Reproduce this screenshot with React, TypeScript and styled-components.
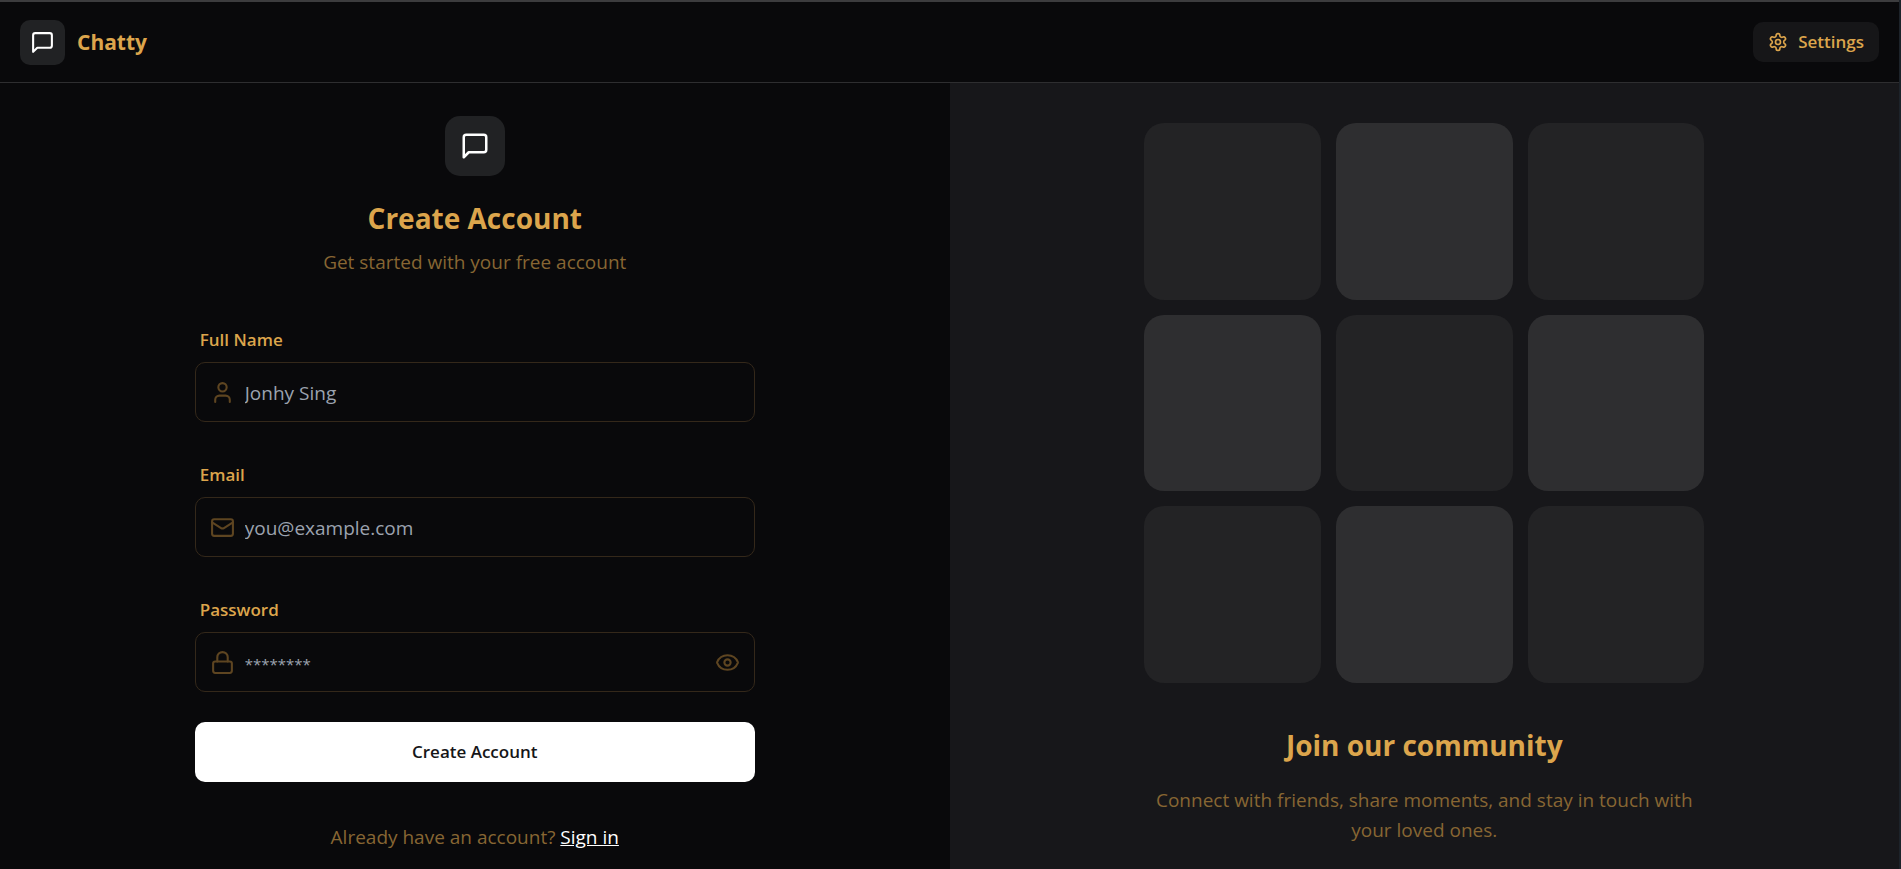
import React, { useState } from "react";
import styled, { createGlobalStyle } from "styled-components";
import { Eye, EyeOff, Lock, Mail, User } from "lucide-react";

const color = {
  page: "#09090b",
  panel: "#17171a",
  badge: "#212224",
  accent: "#dca54c",
  muted: "#876633",
  faint: "#5e4521",
  outline: "#34281a",
  placeholder: "#9ca3af",
};

const GlobalStyle = createGlobalStyle`
  *, *::before, *::after { box-sizing: border-box; }
  html { background: #1d232a; }
  body {
    margin: 0;
    font-family: "Segoe UI", "Open Sans", "Noto Sans", sans-serif;
    font-size: 19px;
    line-height: 30px;
    color: ${color.accent};
  }
  h1, h2, p { margin: 0; }
  button, input { font: inherit; }
`;

const Page = styled.div`
  min-height: 100vh;
  margin-right: 2px;
  display: flex;
  flex-direction: column;
  background: ${color.page};
  border-top: 2px solid #3c3c3e;
`;

const Header = styled.header`
  display: flex;
  align-items: center;
  justify-content: space-between;
  height: 81px;
  padding: 0 20px;
  border-bottom: 1px solid #2e2e30;
`;

const Brand = styled.a`
  display: flex;
  align-items: center;
  gap: 12px;
  color: ${color.accent};
  font-size: 21px;
  font-weight: 700;
  text-decoration: none;
`;

const Badge = styled.span<{ $large?: boolean }>`
  display: flex;
  align-items: center;
  justify-content: center;
  width: ${(p) => (p.$large ? 60 : 45)}px;
  height: ${(p) => (p.$large ? 60 : 45)}px;
  border-radius: ${(p) => (p.$large ? 15 : 10)}px;
  background: ${color.badge};
  color: #fff;
`;

const SettingsButton = styled.button`
  display: flex;
  align-items: center;
  gap: 10px;
  height: 40px;
  padding: 0 15px;
  border: 0;
  border-radius: 10px;
  background: #161618;
  color: ${color.accent};
  font-size: 17px;
  font-weight: 600;
  cursor: pointer;
`;

const Main = styled.main`
  flex: 1;
  display: grid;
  grid-template-columns: 1fr 1fr;
`;

const FormPanel = styled.section`
  display: flex;
  flex-direction: column;
  align-items: center;
  padding: 33px 60px 0;
`;

const Intro = styled.div`
  display: flex;
  flex-direction: column;
  align-items: center;
  text-align: center;
`;

const Title = styled.h1`
  margin: 22px 0 9px;
  font-size: 28px;
  line-height: 40px;
`;

const Muted = styled.p`
  color: ${color.muted};
`;

const Form = styled.form`
  width: 100%;
  max-width: 560px;
  margin-top: 40px;
  display: flex;
  flex-direction: column;
  gap: 30px;
`;

const Field = styled.div`
  display: flex;
  flex-direction: column;
`;

const Label = styled.label`
  height: 45px;
  padding: 8px 5px;
  font-size: 17px;
  font-weight: 600;
`;

const InputBox = styled.div`
  display: flex;
  align-items: center;
  gap: 10px;
  height: 60px;
  padding: 0 14px;
  border: 1px solid ${color.outline};
  border-radius: 10px;
  color: ${color.faint};
`;

const Input = styled.input`
  flex: 1;
  min-width: 0;
  height: 56px;
  padding: 2px 0 0;
  border: 0;
  outline: 0;
  background: transparent;
  color: ${color.accent};
  &::placeholder { color: ${color.placeholder}; opacity: 1; }
  &[type="password"]::placeholder { font-size: 15px; }
`;

const IconButton = styled.button`
  display: flex;
  padding: 0;
  border: 0;
  background: transparent;
  color: inherit;
  cursor: pointer;
`;

const SubmitButton = styled.button`
  height: 60px;
  border: 0;
  border-radius: 10px;
  background: #fff;
  color: #161618;
  font-size: 17px;
  font-weight: 600;
  cursor: pointer;
`;

const SignIn = styled(Muted)`
  margin-top: 40px;
`;

const SignInLink = styled.a`
  color: #fff;
`;

const Community = styled.aside`
  display: flex;
  flex-direction: column;
  align-items: center;
  padding: 40px 60px 0;
  background: ${color.panel};
  text-align: center;
`;

const Pattern = styled.div`
  width: 100%;
  max-width: 560px;
  display: grid;
  grid-template-columns: repeat(3, 1fr);
  gap: 15px;
`;

const Tile = styled.div<{ $bright: boolean }>`
  aspect-ratio: 1;
  border-radius: 20px;
  background: ${(p) => (p.$bright ? "#2e2e30" : "#232325")};
`;

const CommunityTitle = styled.h2`
  margin-top: 42px;
  font-size: 28px;
  line-height: 40px;
`;

const CommunityText = styled(Muted)`
  max-width: 560px;
  margin-top: 20px;
`;

const OutlineIcon = styled.svg.attrs({
  viewBox: "0 0 24 24",
  fill: "none",
  stroke: "currentColor",
  strokeWidth: 2,
  strokeLinecap: "round",
  strokeLinejoin: "round",
  "aria-hidden": true,
})``;

const ChatIcon = ({ size }: { size: number }) => (
  <OutlineIcon width={size} height={size}>
    <path d="M21 15a2 2 0 0 1-2 2H7l-4 4V5a2 2 0 0 1 2-2h14a2 2 0 0 1 2 2z" />
  </OutlineIcon>
);

const GearIcon = ({ size }: { size: number }) => (
  <OutlineIcon width={size} height={size}>
    <path d="M12.22 2h-.44a2 2 0 0 0-2 2v.18a2 2 0 0 1-1 1.73l-.43.25a2 2 0 0 1-2 0l-.15-.08a2 2 0 0 0-2.73.73l-.22.38a2 2 0 0 0 .73 2.73l.15.1a2 2 0 0 1 1 1.72v.51a2 2 0 0 1-1 1.74l-.15.09a2 2 0 0 0-.73 2.73l.22.38a2 2 0 0 0 2.73.73l.15-.08a2 2 0 0 1 2 0l.43.25a2 2 0 0 1 1 1.73V20a2 2 0 0 0 2 2h.44a2 2 0 0 0 2-2v-.18a2 2 0 0 1 1-1.73l.43-.25a2 2 0 0 1 2 0l.15.08a2 2 0 0 0 2.73-.73l.22-.39a2 2 0 0 0-.73-2.73l-.15-.08a2 2 0 0 1-1-1.74v-.5a2 2 0 0 1 1-1.74l.15-.09a2 2 0 0 0 .73-2.73l-.22-.38a2 2 0 0 0-2.73-.73l-.15.08a2 2 0 0 1-2 0l-.43-.25a2 2 0 0 1-1-1.73V4a2 2 0 0 0-2-2z" />
    <circle cx="12" cy="12" r="3" />
  </OutlineIcon>
);

const tiles = Array.from({ length: 9 }, (_, i) => i % 2 === 1);

export default function App() {
  const [visible, setVisible] = useState(false);
  return (
    <>
      <GlobalStyle />
      <Page>
        <Header>
          <Brand href="#">
            <Badge><ChatIcon size={25} /></Badge>
            Chatty
          </Brand>
          <SettingsButton type="button">
            <GearIcon size={20} />
            Settings
          </SettingsButton>
        </Header>
        <Main>
          <FormPanel>
            <Intro>
              <Badge $large><ChatIcon size={30} /></Badge>
              <Title>Create Account</Title>
              <Muted>Get started with your free account</Muted>
            </Intro>
            <Form onSubmit={(e) => e.preventDefault()}>
              <Field>
                <Label htmlFor="name">Full Name</Label>
                <InputBox>
                  <User size={25} />
                  <Input id="name" type="text" placeholder="Jonhy Sing" />
                </InputBox>
              </Field>
              <Field>
                <Label htmlFor="email">Email</Label>
                <InputBox>
                  <Mail size={25} />
                  <Input id="email" type="email" placeholder="you@example.com" />
                </InputBox>
              </Field>
              <Field>
                <Label htmlFor="password">Password</Label>
                <InputBox>
                  <Lock size={25} />
                  <Input id="password" type={visible ? "text" : "password"} placeholder="********" />
                  <IconButton
                    type="button"
                    aria-label={visible ? "Hide password" : "Show password"}
                    onClick={() => setVisible(!visible)}
                  >
                    {visible ? <EyeOff size={25} /> : <Eye size={25} />}
                  </IconButton>
                </InputBox>
              </Field>
              <SubmitButton type="submit">Create Account</SubmitButton>
            </Form>
            <SignIn>
              Already have an account? <SignInLink href="#">Sign in</SignInLink>
            </SignIn>
          </FormPanel>
          <Community>
            <Pattern>
              {tiles.map((bright, i) => <Tile key={i} $bright={bright} />)}
            </Pattern>
            <CommunityTitle>Join our community</CommunityTitle>
            <CommunityText>
              Connect with friends, share moments, and stay in touch with your loved ones.
            </CommunityText>
          </Community>
        </Main>
      </Page>
    </>
  );
}
